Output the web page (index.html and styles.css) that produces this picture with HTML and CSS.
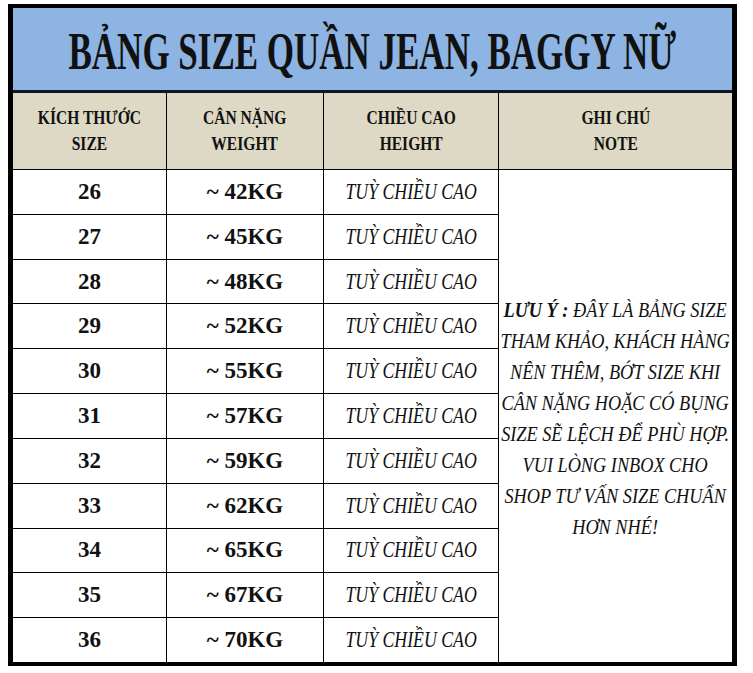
FILE: index.html
```html
<!DOCTYPE html>
<html lang="vi">
<head>
<meta charset="utf-8">
<title>Bảng size quần jean, baggy nữ</title>
<link rel="stylesheet" href="styles.css">
</head>
<body>
<div class="sheet">
  <div class="title"><span class="sx title-text">BẢNG SIZE QUẦN JEAN, BAGGY NỮ</span></div>
  <div class="grid">
    <div class="cell head"><span class="sx hx">KÍCH THƯỚC<br>SIZE</span></div>
    <div class="cell head"><span class="sx hx">CÂN NẶNG<br>WEIGHT</span></div>
    <div class="cell head"><span class="sx hx">CHIỀU CAO<br>HEIGHT</span></div>
    <div class="cell head"><span class="sx hx">GHI CHÚ<br>NOTE</span></div>

    <div class="cell num">26</div><div class="cell num">~ 42KG</div><div class="cell it"><span class="sx ix">TUỲ CHIỀU CAO</span></div>
    <div class="cell note"><p class="sx nx"><b>LƯU Ý :</b> ĐÂY LÀ BẢNG SIZE<br>THAM KHẢO, KHÁCH HÀNG<br>NÊN THÊM, BỚT SIZE KHI<br>CÂN NẶNG HOẶC CÓ BỤNG<br>SIZE SẼ LỆCH ĐỂ PHÙ HỢP.<br>VUI LÒNG INBOX CHO<br>SHOP TƯ VẤN SIZE CHUẨN<br>HƠN NHÉ!</p></div>
    <div class="cell num">27</div><div class="cell num">~ 45KG</div><div class="cell it"><span class="sx ix">TUỲ CHIỀU CAO</span></div>
    <div class="cell num">28</div><div class="cell num">~ 48KG</div><div class="cell it"><span class="sx ix">TUỲ CHIỀU CAO</span></div>
    <div class="cell num">29</div><div class="cell num">~ 52KG</div><div class="cell it"><span class="sx ix">TUỲ CHIỀU CAO</span></div>
    <div class="cell num">30</div><div class="cell num">~ 55KG</div><div class="cell it"><span class="sx ix">TUỲ CHIỀU CAO</span></div>
    <div class="cell num">31</div><div class="cell num">~ 57KG</div><div class="cell it"><span class="sx ix">TUỲ CHIỀU CAO</span></div>
    <div class="cell num">32</div><div class="cell num">~ 59KG</div><div class="cell it"><span class="sx ix">TUỲ CHIỀU CAO</span></div>
    <div class="cell num">33</div><div class="cell num">~ 62KG</div><div class="cell it"><span class="sx ix">TUỲ CHIỀU CAO</span></div>
    <div class="cell num">34</div><div class="cell num">~ 65KG</div><div class="cell it"><span class="sx ix">TUỲ CHIỀU CAO</span></div>
    <div class="cell num">35</div><div class="cell num">~ 67KG</div><div class="cell it"><span class="sx ix">TUỲ CHIỀU CAO</span></div>
    <div class="cell num">36</div><div class="cell num">~ 70KG</div><div class="cell it"><span class="sx ix">TUỲ CHIỀU CAO</span></div>
  </div>
</div>
</body>
</html>
```
FILE: styles.css
```css
html, body {
  background: #ffffff;
}
body {
  margin: 4px 0 0 8px;
  font-family: "Liberation Serif", "Times New Roman", serif;
  color: #111111;
}
.sheet {
  box-sizing: border-box;
  width: 729px;
  border-style: solid;
  border-color: #000000;
  border-width: 4px 5px 4px 5px;
  background: #000000;
}
.title {
  height: 82px;
  background: #8db4e2;
  border-bottom: 3px solid #0e1626;
  display: flex;
  align-items: center;
  justify-content: center;
}
.sx {
  display: inline-block;
  transform-origin: center center;
  white-space: nowrap;
}
.title-text {
  font-weight: bold;
  font-size: 53px;
  line-height: 1;
  transform: scaleX(0.66);
  padding-top: 4px;
}
.grid {
  display: grid;
  grid-template-columns: 153px 156px 174px 1fr;
  grid-template-rows: 76px repeat(11, 1fr);
  gap: 1px;
  height: 569px;
  background: #000000;
}
.cell {
  background: #ffffff;
  display: flex;
  align-items: center;
  justify-content: center;
  text-align: center;
}
.head {
  background: #ddd9c4;
}
.hx {
  font-weight: bold;
  font-size: 18.5px;
  line-height: 26px;
  transform: scaleX(0.84);
}
.num {
  font-weight: bold;
  font-size: 23px;
}
.ix {
  font-style: italic;
  font-size: 22.5px;
  transform: scaleX(0.79);
}
.note {
  grid-column: 4;
  grid-row: 2 / span 11;
  overflow: hidden;
}
.nx {
  margin: 0;
  font-style: italic;
  font-size: 22px;
  line-height: 31px;
  text-align: center;
  transform: scaleX(0.83);
  padding-top: 4px;
}
```
